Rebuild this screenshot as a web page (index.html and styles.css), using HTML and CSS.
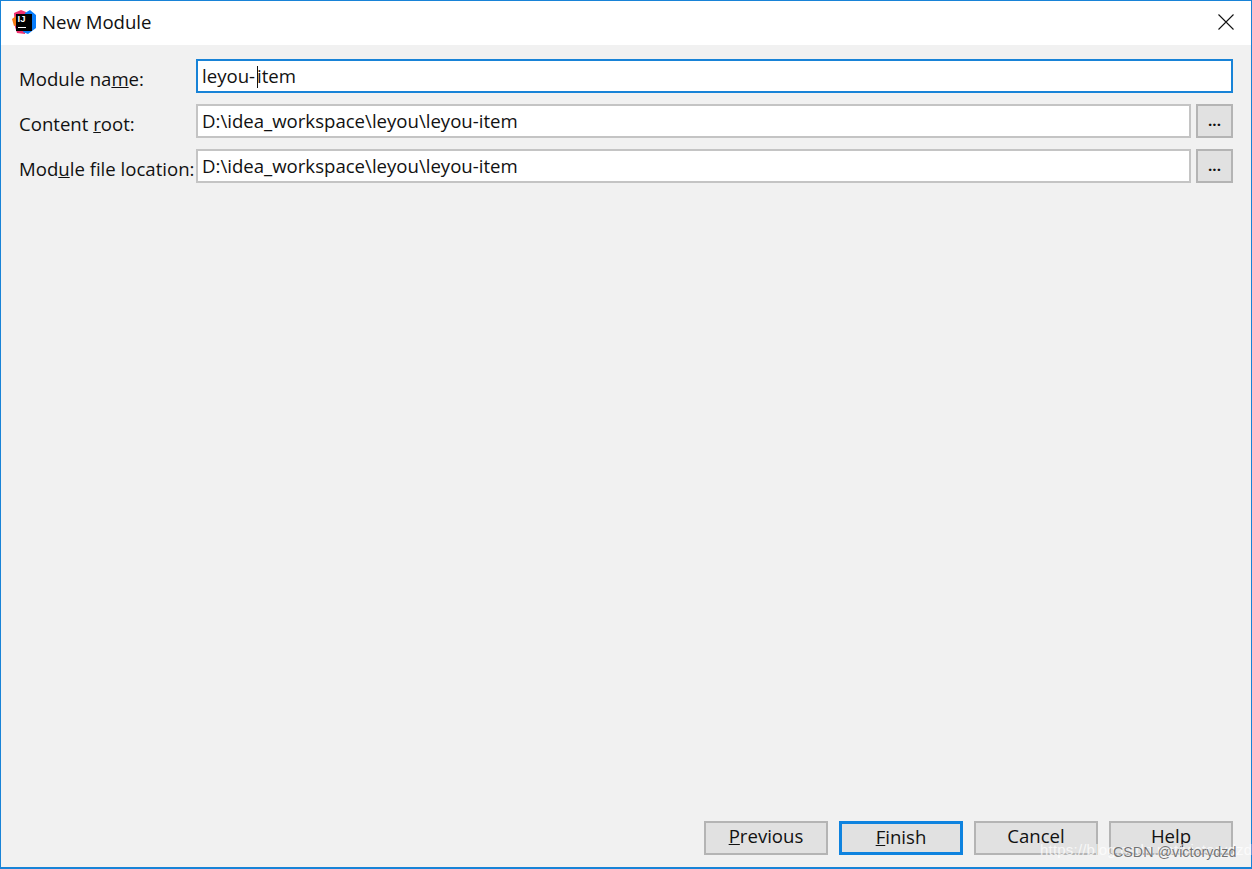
FILE: index.html
```html
<!DOCTYPE html>
<html lang="en">
<head>
  <meta charset="UTF-8">
  <title>New Module</title>
  <link rel="stylesheet" href="styles.css">
</head>
<body>
  <div class="dialog">
    <div class="title-bar">
      <svg class="app-icon" width="24" height="24" viewBox="0 0 24 24">
        <path d="M2 3 L9 0 L14 2 L13 24 L5 23 L3 17 Z" fill="#f0316f"/>
        <path d="M0 9 L4 6 L5 15 L2 16 Z" fill="#f97a12"/>
        <path d="M13 3 L18 0 L24 5 L24 18 L16 24 L11 22 Z" fill="#087cfa"/>
        <rect x="4" y="4" width="16" height="17" fill="#000"/>
        <text class="app-icon-text" x="5.5" y="12">IJ</text>
        <rect x="6" y="17" width="8" height="1" fill="#fff"/>
      </svg>
      <span class="title">New Module</span>
      <svg class="close" width="16" height="16" viewBox="0 0 16 16">
        <path d="M.5 .5 L15.5 15.5 M15.5 .5 L.5 15.5" stroke="#111" stroke-width="1.1" fill="none"/>
      </svg>
    </div>

    <div class="content">
      <div class="form">
        <label class="label">Module na<u>m</u>e:</label>
        <div class="field-row">
          <div class="field focused">leyou-<span class="caret"></span>item</div>
        </div>
        <label class="label">Content <u>r</u>oot:</label>
        <div class="field-row">
          <div class="field">D:\idea_workspace\leyou\leyou-item</div>
          <button class="browse">...</button>
        </div>
        <label class="label">Mod<u>u</u>le file location:</label>
        <div class="field-row">
          <div class="field">D:\idea_workspace\leyou\leyou-item</div>
          <button class="browse">...</button>
        </div>
      </div>

      <div class="buttons">
        <button class="btn"><u>P</u>revious</button>
        <button class="btn default"><u>F</u>inish</button>
        <button class="btn">Cancel</button>
        <button class="btn">Help</button>
      </div>
    </div>
  </div>
  <div class="watermark watermark-url">https://blog.csdn.net/victorydzd</div>
  <div class="watermark watermark-csdn">CSDN @victorydzd</div>
</body>
</html>
```

FILE: styles.css
```css
html, body { margin: 0; height: 100%; }
body { font-family: "Open Sans", "Noto Sans", sans-serif; font-size: 18.6px; color: #111; overflow: hidden; position: relative; }
.dialog { box-sizing: border-box; height: 869px; border: 1px solid #1883d7; border-bottom-width: 2px; display: flex; flex-direction: column; background: #f1f1f1; }

.title-bar { box-sizing: border-box; height: 44px; background: #fff; display: flex; align-items: center; padding: 0 17px 2px 11px; flex: none; }
.app-icon { flex: none; margin-right: 6px; }
.app-icon-text { font-family: "Liberation Sans", sans-serif; font-size: 9.5px; font-weight: bold; fill: #fff; }
.title { flex: 1; position: relative; top: -1px; }

.content { flex: 1; display: flex; flex-direction: column; justify-content: space-between; padding: 14px 18px 12px 18px; }
.form { display: grid; grid-template-columns: 177px 1fr; row-gap: 11px; }
.label { line-height: 34px; padding-top: 3px; height: 31px; white-space: nowrap; }
.field-row { display: flex; gap: 5px; }
.field { flex: 1; box-sizing: border-box; height: 34px; background: #fff; border: 2px solid #c4c4c4; padding-left: 4px; line-height: 29px; white-space: nowrap; }
.field.focused { border-color: #1883d7; }
.caret { display: inline-block; width: 1px; height: 22px; background: #111; vertical-align: -5px; margin: 0 -1px 0 2px; }

.browse { box-sizing: border-box; width: 37px; height: 34px; background: #e1e1e1; border: 2px solid #b4b4b4; padding: 0 0 2px; font-family: inherit; font-size: 15px; font-weight: bold; color: #111; }

.buttons { display: flex; justify-content: flex-end; gap: 11px; }
.btn { box-sizing: border-box; width: 124px; height: 34px; background: #e1e1e1; border: 2px solid #b4b4b4; padding: 0 0 6px; font-family: inherit; font-size: 18.6px; color: #111; }
.btn.default { border: 3px solid #0f83df; }

.watermark { position: absolute; white-space: nowrap; font-family: "Liberation Sans", sans-serif; font-size: 14.3px; line-height: 18px; }
.watermark-url { left: 1040px; top: 841px; color: rgba(255, 255, 255, .75); font-size: 15px; letter-spacing: .2px; }
.watermark-csdn { left: 1113px; top: 843px; color: rgba(90, 90, 90, .85); text-shadow: 0 0 1px #fff; }
```
